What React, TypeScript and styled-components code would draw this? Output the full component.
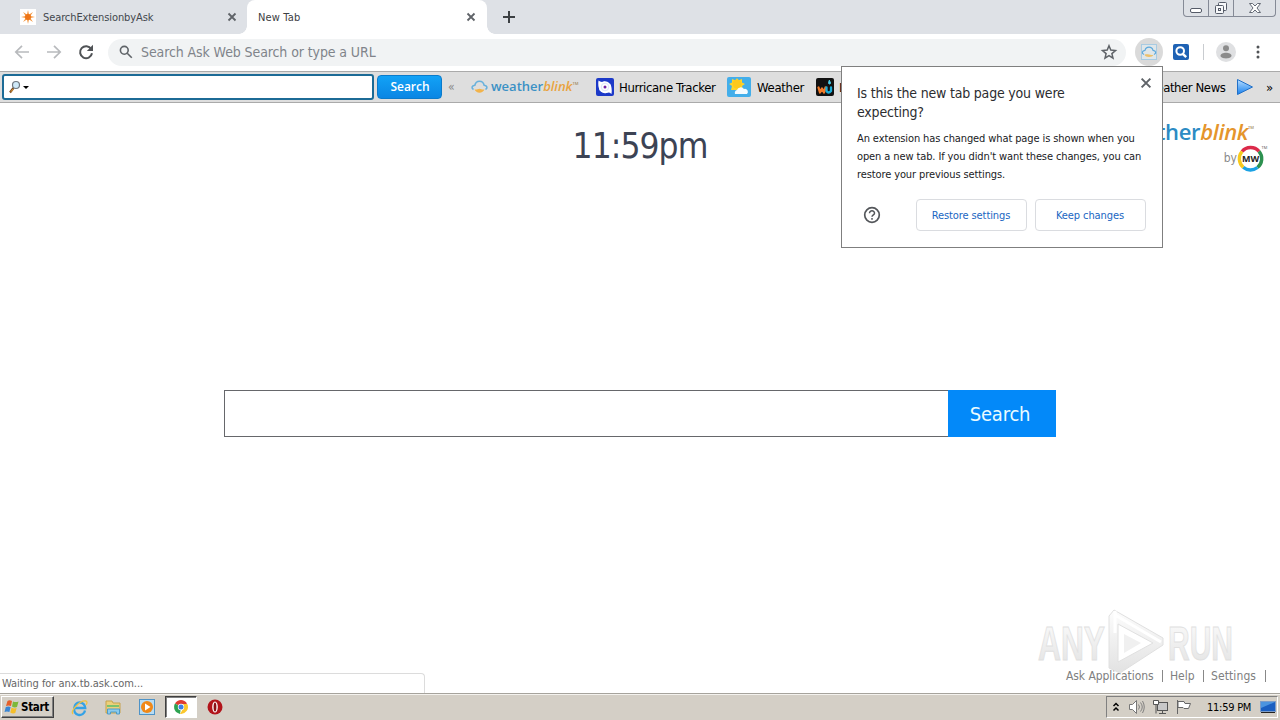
import React from "react";
import styled, { createGlobalStyle, css } from "styled-components";

const Global = createGlobalStyle`
  *, *::before, *::after { box-sizing: border-box; }
  html, body { margin: 0; overflow: hidden; }
  body {
    font-family: "DejaVu Sans Condensed", "DejaVu Sans", sans-serif;
    font-stretch: condensed;
    font-size: 11px;
    color: #000;
  }
  svg { display: block; flex: none; overflow: visible; }
  button, input { font: inherit; }
`;

const Screen = styled.div`
  position: relative;
  width: 1280px;
  height: 720px;
  display: flex;
  flex-direction: column;
  background: #fff;
  overflow: hidden;
`;

const Label = styled.span<{ $size?: number; $color?: string; $ls?: number; $w?: number; $gap?: number }>`
  flex: none;
  white-space: nowrap;
  font-size: ${(p) => p.$size ?? 11}px;
  color: ${(p) => p.$color ?? "#000"};
  letter-spacing: ${(p) => p.$ls ?? 0}px;
  width: ${(p) => (p.$w ? `${p.$w}px` : "auto")};
  margin-left: ${(p) => p.$gap ?? 0}px;
`;

const Spacer = styled.div<{ $w?: number }>`
  flex: ${(p) => (p.$w ? `0 0 ${p.$w}px` : "1 1 0")};
`;

/* Tab strip */
const TabStrip = styled.header`
  display: flex;
  flex: 0 0 34px;
  background: #dee1e6;
`;

const Tab = styled.div<{ $active?: boolean; $w: number; $pl: number }>`
  position: relative;
  display: flex;
  align-items: center;
  width: ${(p) => p.$w}px;
  padding: 0 ${(p) => (p.$active ? 12 : 11)}px 0 ${(p) => p.$pl}px;
  ${(p) =>
    p.$active &&
    css`
      background: #fff;
      border-radius: 8px 8px 0 0;
      &::before, &::after {
        content: "";
        position: absolute;
        bottom: 0;
        width: 8px;
        height: 8px;
      }
      &::before { left: -8px; background: radial-gradient(circle at 0 0, transparent 7.5px, #fff 8px); }
      &::after { right: -8px; background: radial-gradient(circle at 100% 0, transparent 7.5px, #fff 8px); }
    `}
`;

const Favicon = styled.div`
  width: 16px;
  height: 16px;
  margin-right: 7px;
  background: #fff;
`;

const WindowControls = styled.div`
  display: flex;
  height: 17px;
  margin-right: 4px;
  border: 1px solid #858a96;
  border-top: 0;
  border-radius: 0 0 4px 4px;
`;

const WindowButton = styled.div<{ $w: number }>`
  display: flex;
  justify-content: center;
  width: ${(p) => p.$w}px;
  & + & { border-left: 1px solid #858a96; }
`;

/* Address bar */
const NavBar = styled.nav`
  display: flex;
  align-items: center;
  flex: 0 0 37px;
  padding: 0 0 1px 14px;
  background: #fff;
`;

const Omnibox = styled.div`
  display: flex;
  align-items: center;
  width: 1018px;
  height: 27px;
  margin-left: 14px;
  padding: 0 9px 0 11px;
  border-radius: 14px;
  background: #f1f3f4;
`;

const ExtensionHalo = styled.div`
  display: flex;
  align-items: center;
  justify-content: center;
  width: 28px;
  height: 28px;
  margin-left: 9px;
  border-radius: 50%;
  background: #dadada;
`;

const NavDivider = styled.div`
  width: 1px;
  height: 16px;
  margin: 0 12px 0 14px;
  background: #c9ccd0;
`;

/* Extension toolbar */
const AskBar = styled.div`
  display: flex;
  align-items: center;
  flex: 0 0 32px;
  padding: 0 6px 0 2px;
  border-top: 1px solid #aaa;
  border-bottom: 1px solid #aaa;
  background: #dedede;
`;

const AskInput = styled.div`
  display: flex;
  align-items: center;
  width: 372px;
  height: 26px;
  padding-left: 5px;
  border: 2px solid #1c6b96;
  border-radius: 3px;
  background: #fff;
`;

const AskSearch = styled.button`
  width: 65px;
  height: 24px;
  margin-left: 3px;
  padding: 0 0 1px 1px;
  border: 1px solid #0b7bcb;
  border-radius: 4px;
  background: linear-gradient(#12a2f6, #0a86e4);
  color: #fff;
  font-family: "Open Sans", sans-serif;
  font-stretch: normal;
  font-size: 12px;
  font-weight: 600;
`;

const Brand = styled.span<{ $size: number; $ls?: number; $tone: string; $accent: string }>`
  flex: none;
  font-family: "Open Sans", sans-serif;
  font-stretch: normal;
  font-size: ${(p) => p.$size}px;
  line-height: 1;
  font-weight: 600;
  letter-spacing: ${(p) => p.$ls ?? 0}px;
  color: ${(p) => p.$tone};
  white-space: nowrap;
  i { color: ${(p) => p.$accent}; }
  sup {
    position: relative;
    top: ${(p) => -p.$size * 0.48}px;
    font-size: 4px;
    line-height: 0;
    letter-spacing: 0;
    vertical-align: baseline;
    color: #a08a62;
  }
`;

const BarBrand = styled.div`
  display: flex;
  align-items: center;
  width: 108px;
  gap: 3px;
  padding-bottom: 1px;
`;

/* New tab page */
const Page = styled.main`
  position: relative;
  flex: 1;
  display: flex;
  flex-direction: column;
  align-items: center;
`;

const Clock = styled.div`
  height: 50px;
  margin-top: 18px;
  line-height: 50px;
  font-size: 35px;
  letter-spacing: -0.95px;
  color: #3c4354;
`;

const PageLogo = styled.div`
  position: absolute;
  top: 17px;
  right: 13px;
  display: flex;
  flex-direction: column;
  align-items: flex-end;
  gap: 2px;
`;

const BrandInset = styled.div`
  display: flex;
  padding-right: 13px;
`;

const PoweredBy = styled.div`
  display: flex;
  align-items: center;
  height: 28px;
`;

const SearchRow = styled.form`
  display: flex;
  width: 832px;
  height: 47px;
  margin-top: 219px;
`;

const SearchField = styled.input`
  flex: 1;
  border: 1px solid #66676b;
  border-right: 0;
  padding: 0 12px;
  outline: 0;
`;

const SearchButton = styled.button`
  width: 108px;
  border: 0;
  padding: 0 4px 0 0;
  background: #0389f9;
  color: #e9fbff;
  font-size: 20px;
  letter-spacing: -0.2px;
`;

const Footer = styled.footer`
  align-self: stretch;
  display: flex;
  justify-content: space-between;
  align-items: flex-end;
  margin-top: auto;
`;

const StatusBubble = styled.div`
  display: flex;
  align-items: center;
  width: 425px;
  height: 20px;
  padding-left: 2px;
  border: 1px solid #dcdcdc;
  border-left: 0;
  border-bottom: 0;
  border-radius: 0 4px 0 0;
  background: #fff;
`;

const FooterLinks = styled.div`
  display: flex;
  align-items: center;
  width: 214px;
  height: 34px;
`;

const Pipe = styled.div<{ $l: number; $r: number }>`
  width: 1px;
  height: 12px;
  margin: 0 ${(p) => p.$r}px 0 ${(p) => p.$l}px;
  background: #888;
`;

const Watermark = styled.div`
  position: absolute;
  left: 1030px;
  top: 606px;
`;

/* Extension prompt */
const Prompt = styled.section`
  position: absolute;
  left: 841px;
  top: 66px;
  width: 322px;
  height: 182px;
  padding: 17px 16px 16px 15px;
  border: 1px solid #7f7f7f;
  background: #fff;
`;

const PromptClose = styled.div`
  position: absolute;
  top: 11px;
  right: 11px;
`;

const PromptTitle = styled.div`
  font-size: 14px;
  line-height: 19px;
  letter-spacing: -0.19px;
  white-space: nowrap;
  color: #2c2d30;
`;

const PromptBody = styled.div`
  margin-top: 8px;
  font-size: 11px;
  line-height: 18px;
  letter-spacing: -0.11px;
  white-space: nowrap;
  color: #202124;
`;

const PromptActions = styled.div`
  display: flex;
  align-items: center;
  gap: 8px;
  margin-top: 15px;
  padding-left: 6px;
`;

const PromptButton = styled.button`
  width: 111px;
  height: 32px;
  padding: 0 1px 0 0;
  border: 1px solid #dadce0;
  border-radius: 4px;
  background: #fff;
  color: #1a66c2;
  letter-spacing: -0.1px;
`;

/* Taskbar */
const Taskbar = styled.div`
  display: flex;
  align-items: center;
  flex: 0 0 27px;
  padding: 0 2px 0 1px;
  border-top: 1px solid #a6a39c;
  box-shadow: inset 0 1px #f4f2ee;
  background: #d4cfc6;
`;

const StartButton = styled.div`
  display: flex;
  align-items: center;
  gap: 1px;
  width: 53px;
  height: 22px;
  padding-left: 2px;
  border: 1px solid;
  border-color: #fff #404040 #404040 #fff;
  box-shadow: inset -1px -1px #808080;
  font-weight: bold;
  font-size: 11.5px;
  letter-spacing: -0.3px;
`;

const TaskIcon = styled.div<{ $pressed?: boolean }>`
  display: flex;
  align-items: center;
  justify-content: center;
  width: ${(p) => (p.$pressed ? 32 : 34)}px;
  height: 22px;
  ${(p) =>
    p.$pressed &&
    css`
      margin: 0 1px;
      border: 1px solid;
      border-color: #404040 #fff #fff #404040;
      box-shadow: inset 1px 1px #808080;
      background: #fff;
    `}
`;

const Tray = styled.div`
  display: flex;
  align-items: center;
  width: 172px;
  height: 22px;
  padding-left: 5px;
  border: 1px solid;
  border-color: #808080 #fff #fff #808080;
`;

const Cross = ({ color = "#5f6368", size = 8, weight = 1.8 }: { color?: string; size?: number; weight?: number }) => (
  <svg width={size} height={size} viewBox="0 0 8 8">
    <path d="M.5.5l7 7M7.5.5l-7 7" stroke={color} strokeWidth={weight} />
  </svg>
);

const Arrow = ({ flip }: { flip?: boolean }) => (
  <svg width="16" height="16" viewBox="0 0 16 16" transform={flip ? "scale(-1 1)" : undefined}>
    <path d="M15 8H2M8 1.8L1.8 8 8 14.2" fill="none" stroke="#b8babd" strokeWidth="1.7" />
  </svg>
);

const CloudSun = () => (
  <svg width="17" height="15" viewBox="0 0 17 15">
    <path d="M2.500 10.500C0 9 .8 6.800 3.800 6.300 5 .8 12 .8 13.200 6.300c3 .5 3.800 2.700 1.300 4.200" fill="none" stroke="#68b1dc" strokeWidth="1.600" />
    <path d="M3.500 10.300c2 .8 3-.6 5-.6s3 1.400 5 .6c-1.500 4.500-8.500 4.500-10 0z" fill="#f2b34a" />
  </svg>
);

const MwBadge = () => (
  <svg width="30" height="28" viewBox="1 0 30 28">
    <g fill="none" strokeWidth="3.4">
      <path d="M6 7.500A11.200 11.200 0 0123 7.400" stroke="#dc2a4a" />
      <path d="M23 7.400A11.200 11.200 0 0121.500 23.500" stroke="#2d9150" />
      <path d="M21.500 23.500A11.200 11.200 0 017.200 23.200" stroke="#1ba2e4" />
      <path d="M7.200 23.200A11.200 11.200 0 016 7.500" stroke="#f7c91d" />
    </g>
    <text x="14.500" y="18.300" textAnchor="middle" fontFamily="Open Sans" fontStretch="normal" fontWeight="700" fontSize="9" fill="#222">MW</text>
    <text x="25.500" y="4.500" fontFamily="Open Sans" fontStretch="normal" fontSize="4" fill="#555">TM</text>
  </svg>
);

const AnyRun = () => (
  <svg width="210" height="70" viewBox="0 0 210 70">
    <defs>
      <linearGradient id="wm" x1="0" y1="0" x2="0" y2="1">
        <stop offset="0" stopColor="#fdfdfd" />
        <stop offset="1" stopColor="#e2e2e2" />
      </linearGradient>
    </defs>
    <g fontFamily="Liberation Sans Narrow, Liberation Sans" fontWeight="bold" fontSize="49" fill="url(#wm)" stroke="#e0e0e0" strokeWidth="1">
      <text x="8" y="54" textLength="67" lengthAdjust="spacingAndGlyphs">ANY</text>
      <text x="138" y="54" textLength="65" lengthAdjust="spacingAndGlyphs">RUN</text>
    </g>
    <path d="M79 10V62L90 67 133 39V32L84 4zM88 18L123 37 88 56z" fill="url(#wm)" fillRule="evenodd" stroke="#e0e0e0" />
    <path d="M85 5V27M85 9L131 36" stroke="#fff" strokeWidth="3" />
    <path d="M94 28V47L111 37z" fill="#f0f0f0" />
  </svg>
);

export default function App() {
  return (
    <>
      <Global />
      <Screen>
        <TabStrip>
          <Tab $w={247} $pl={20}>
            <Favicon>
              <svg width="16" height="16" viewBox="-8 -8 16 16">
                {[0, 45, 90, 135].map((a) => (
                  <path key={a} d="M-7 0L0-1.5 7 0 0 1.5z" fill="#f3943c" transform={`rotate(${a})`} />
                ))}
                <circle r="3" fill="#ee7518" />
              </svg>
            </Favicon>
            <Label $color="#43474d" $ls={-0.1}>SearchExtensionbyAsk</Label>
            <Spacer />
            <Cross />
          </Tab>
          <Tab $active $w={240} $pl={11}>
            <Label $color="#3c4043" $ls={0.15}>New Tab</Label>
            <Spacer />
            <Cross />
          </Tab>
          <Spacer $w={16} />
          <svg width="12" height="34" viewBox="0 0 12 34">
            <path d="M6 11v12M0 17h12" stroke="#3c4043" strokeWidth="2" />
          </svg>
          <Spacer />
          <WindowControls>
            <WindowButton $w={24}>
              <svg width="14" height="16"><rect x="1.5" y="8.5" width="11" height="4" rx="1.5" fill="#fff" stroke="#555b68" /></svg>
            </WindowButton>
            <WindowButton $w={25}>
              <svg width="14" height="16" fill="#f7f8fa" stroke="#555b68">
                <rect x="4.5" y="2.5" width="8" height="8" rx="1" />
                <rect x="1.5" y="5.5" width="8" height="8" rx="1" />
                <rect x="4.5" y="8.5" width="2" height="2" />
              </svg>
            </WindowButton>
            <WindowButton $w={42}>
              <svg width="14" height="16" viewBox="0 0 14 16">
                <path d="M1.5 3.5h3L7 6l2.500-2.500h3L9 8l3.500 4.500h-3L7 10l-2.500 2.500h-3L5 8z" fill="#fff" stroke="#555b68" strokeWidth=".9" />
              </svg>
            </WindowButton>
          </WindowControls>
        </TabStrip>

        <NavBar>
          <Arrow />
          <Spacer $w={16} />
          <Arrow flip />
          <Spacer $w={16} />
          <svg width="16" height="16" viewBox="0 0 16 16">
            <path d="M13.200 5A6 6 0 1014 9.300" fill="none" stroke="#505356" strokeWidth="2" />
            <path d="M15 .8V7H8.800z" fill="#505356" />
          </svg>
          <Omnibox>
            <svg width="14" height="14" viewBox="0 0 14 14" fill="none" stroke="#5f6368" strokeWidth="1.600">
              <circle cx="5.300" cy="5.300" r="3.900" />
              <path d="M8.200 8.200l4.600 4.600" />
            </svg>
            <Label $size={14} $color="#80848a" $gap={8} $ls={-0.1}>Search Ask Web Search or type a URL</Label>
            <Spacer />
            <svg width="16" height="16" viewBox="0 0 16 16">
              <path d="M8 1.800l1.800 4.300 4.700.4-3.600 3.100 1.100 4.600-4-2.500-4 2.500 1.100-4.600L1.500 6.500l4.700-.4z" fill="none" stroke="#5f6368" strokeWidth="1.500" />
            </svg>
          </Omnibox>
          <ExtensionHalo>
            <svg width="16" height="16" viewBox="0 0 16 16">
              <rect x=".5" y=".5" width="15" height="15" fill="#dfe6e9" stroke="#a8cbe2" />
              <path d="M3 10.500C.5 9.500.8 6.500 4 6.300c1-4.300 7-4.300 8 0 3.200.2 3.500 3.200 1 4.200" fill="none" stroke="#5ca8dc" strokeWidth="1.200" />
              <path d="M3.500 10.800c3-1.500 5 .8 9 0-1 3-8 3-9 0z" fill="#ecc06a" />
            </svg>
          </ExtensionHalo>
          <Spacer $w={10} />
          <svg width="16" height="16" viewBox="0 0 16 16">
            <rect width="16" height="16" rx="2" fill="#1e62b4" />
            <circle cx="7.200" cy="7" r="3.800" fill="none" stroke="#fff" strokeWidth="2" />
            <path d="M9.800 9.800l3.400 3.400" stroke="#fff" strokeWidth="2.400" />
          </svg>
          <NavDivider />
          <svg width="20" height="20" viewBox="0 0 20 20">
            <circle cx="10" cy="10" r="10" fill="#dfe0e2" />
            <circle cx="10" cy="6.300" r="3" fill="#8b8b8b" />
            <path d="M4.500 13.800c0-4 11-4 11 0 0 3.500-11 3.500-11 0z" fill="#8b8b8b" />
          </svg>
          <Spacer $w={20} />
          <svg width="4" height="16" fill="#505356">
            <circle cx="2" cy="3" r="1.500" /><circle cx="2" cy="8" r="1.500" /><circle cx="2" cy="13" r="1.500" />
          </svg>
        </NavBar>

        <AskBar>
          <AskInput>
            <svg width="20" height="14" viewBox="0 0 20 14">
              <path d="M4.500 8L1 12.500" stroke="#7b4a1c" strokeWidth="2.200" />
              <path d="M4.200 9L2 11.700" stroke="#f0a83c" />
              <circle cx="7" cy="5" r="3.500" fill="#cfe9f8" stroke="#6f7780" strokeWidth="1.200" />
              <path d="M14 6h6l-3 3z" fill="#000" />
            </svg>
          </AskInput>
          <AskSearch>Search</AskSearch>
          <Label $size={12} $gap={6} $w={17} $color="#888">«</Label>
          <Spacer $w={6} />
          <BarBrand>
            <CloudSun />
            <Brand $size={13} $tone="#3b91c5" $accent="#e9a340">weather<i>blink</i><sup>TM</sup></Brand>
          </BarBrand>
          <Spacer />
          <svg width="18" height="18" viewBox="0 0 18 18">
            <rect width="18" height="18" rx="2" fill="#1c39c8" />
            <circle cx="9" cy="9.300" r="6" fill="#fff" />
            <path d="M2.500 2.500Q5 5 9 3.300L4 13Q1.500 8 2.500 2.500zM15.500 16Q13 13.500 9 15.200L14 5.500Q16.500 10 15.500 16z" fill="#fff" />
            <circle cx="9" cy="9" r="3.800" fill="none" stroke="#d3dafa" strokeWidth=".8" />
            <circle cx="9" cy="9" r="1.500" fill="#7321a5" />
          </svg>
          <Label $size={13} $gap={5} $w={97} $ls={-0.37}>Hurricane Tracker</Label>
          <Spacer $w={11} />
          <svg width="24" height="20" viewBox="0 0 24 20">
            <rect width="24" height="20" rx="2" fill="#43aeea" />
            <path d="M10 1l1.500 2.500L15 2v3.500l3 1.500-3 2 1 4H4L5 9 2 7l3-1.500L5 2l3.500 1.500z" fill="#ffd42c" />
            <circle cx="10" cy="7" r="4.500" fill="#ffc91d" />
            <path d="M8 17a3 3 0 012-4 4 4 0 017-1 3 3 0 013 5z" fill="#f4fbff" />
          </svg>
          <Label $size={13} $gap={6} $w={48} $ls={-0.3}>Weather</Label>
          <Spacer $w={11} />
          <svg width="18" height="18" viewBox="0 0 18 18" fill="none" strokeWidth="2.300" strokeLinecap="round" strokeLinejoin="round">
            <rect width="18" height="18" rx="2" fill="#111" />
            <path d="M2.500 9.500l1.500 5 2-4 2 4 1.500-5" stroke="#f27a28" />
            <path d="M10.500 9.500v3.500q2 3 4.500 0V9.500" stroke="#1bacd7" />
            <path d="M13.500 2.500l1 2.500a1 1 0 01-2 0z" fill="#4cd2f0" stroke="#4cd2f0" strokeWidth="1" />
          </svg>
          <Label $size={13} $gap={5} $w={307}>L</Label>
          <Label $size={13} $w={79} $ls={-0.42}>Weather News</Label>
          <Spacer $w={11} />
          <svg width="18" height="18" viewBox="0 0 18 18">
            <defs>
              <linearGradient id="play" x1="0" y1="0" x2="0" y2="1"><stop stopColor="#b8deff" /><stop offset="1" stopColor="#1680ee" /></linearGradient>
            </defs>
            <path d="M1.500 1.500v15l15-7.500z" fill="url(#play)" stroke="#2170c8" />
          </svg>
          <Label $size={13} $gap={12} $w={8}>»</Label>
        </AskBar>

        <Page>
          <Clock>11:59pm</Clock>
          <PageLogo>
            <BrandInset>
              <Brand $size={22} $ls={-0.35} $tone="#2c8bc4" $accent="#e5952b">weather<i>blink</i><sup>TM</sup></Brand>
            </BrandInset>
            <PoweredBy>
              <Label $size={12} $color="#8a8a8a">by</Label>
              <MwBadge />
            </PoweredBy>
          </PageLogo>
          <SearchRow onSubmit={(e) => e.preventDefault()}>
            <SearchField />
            <SearchButton>Search</SearchButton>
          </SearchRow>
          <Footer>
            <StatusBubble><Label $color="#666" $ls={-0.04}>Waiting for anx.tb.ask.com...</Label></StatusBubble>
            <FooterLinks>
              <Label $size={12} $color="#808080" $w={88} $ls={-0.07}>Ask Applications</Label>
              <Pipe $l={8} $r={7} />
              <Label $size={12} $color="#808080" $w={25}>Help</Label>
              <Pipe $l={8} $r={7} />
              <Label $size={12} $color="#808080" $w={46} $ls={0.1}>Settings</Label>
              <Pipe $l={8} $r={0} />
            </FooterLinks>
          </Footer>
        </Page>

        <Taskbar>
          <StartButton>
            <svg width="16" height="16" viewBox="0 0 16 16">
              <path d="M3.500 2q2-1.500 4.500 0L7 7Q4.500 6 2 7z" fill="#e6602a" />
              <path d="M9 2.500q2.500 1 5.500 0L13 8q-2.500 1-5-.5z" fill="#7db83a" />
              <path d="M1.800 8q2.500-1 4.800 0l-1.200 5Q3 12 .5 13z" fill="#3a86d4" />
              <path d="M7.600 8.500q2.500 1.500 5 .5l-1.300 5q-2.500 1-5-.5z" fill="#f5be2a" />
            </svg>
            Start
          </StartButton>
          <Spacer $w={8} />
          <TaskIcon>
            <svg width="17" height="17" viewBox="0 0 17 17" fill="none">
              <path d="M14 11.500A5.500 5.500 0 113.300 9h11A5.600 5.600 0 008.700 3.500 5.500 5.500 0 003.300 9" stroke="#34a2e6" strokeWidth="2.300" />
              <path d="M2 15C-1 12 9 1 15 2q2 1 0 4" stroke="#efc243" strokeWidth="1.300" />
            </svg>
          </TaskIcon>
          <TaskIcon>
            <svg width="17" height="16" viewBox="0 0 17 16">
              <path d="M1 2h6l1 2h7v10H1z" fill="#ecd07a" stroke="#c5a24c" />
              <path d="M2 6h12v2H2z" fill="#7cc26e" />
              <path d="M2.500 15v-5h12v5h-3v-2h-6v2z" fill="#8ccbed" stroke="#4f9bc8" />
            </svg>
          </TaskIcon>
          <TaskIcon>
            <svg width="16" height="16" viewBox="0 0 16 16">
              <rect x=".5" y=".5" width="15" height="15" fill="#b8dcf3" stroke="#4e93c7" />
              <circle cx="8" cy="8" r="6" fill="#f08818" />
              <path d="M6 4.500v7L11.500 8z" fill="#fff" />
            </svg>
          </TaskIcon>
          <TaskIcon $pressed>
            <svg width="14" height="14" viewBox="0 0 14 14">
              <path d="M7 7L1 3.500A7 7 0 0113 3.500z" fill="#df3c31" />
              <path d="M7 7L1 3.500a7 7 0 005 10.400z" fill="#2da351" />
              <path d="M7 4h6.300A7 7 0 016 13.900L9.500 8z" fill="#fbc72d" />
              <circle cx="7" cy="7" r="3.200" fill="#fff" /><circle cx="7" cy="7" r="2.500" fill="#3d7fe6" />
            </svg>
          </TaskIcon>
          <TaskIcon>
            <svg width="16" height="16" viewBox="0 0 16 16">
              <circle cx="8" cy="8" r="7.500" fill="#b2141b" />
              <ellipse cx="8" cy="8" rx="2.800" ry="5.500" fill="#fff" /><ellipse cx="8" cy="8" rx="1.400" ry="4.500" fill="#8c1015" />
            </svg>
          </TaskIcon>
          <Spacer />
          <Tray>
            <svg width="8" height="10" fill="none" stroke="#000" strokeWidth="1.500"><path d="M1.500 4L4 1.500 6.500 4M1.500 8.500L4 6l2.500 2.500" /></svg>
            <Spacer $w={8} />
            <svg width="17" height="16" viewBox="0 0 17 16" fill="none" stroke="#777">
              <path d="M1.500 5.500h3l4-4v13l-4-4h-3z" fill="#fff" />
              <path d="M10.500 5.500q2 2.500 0 5M12.500 3.500q3.500 4.500 0 9M14.500 2q3.500 6 0 12" strokeWidth=".9" />
            </svg>
            <Spacer $w={7} />
            <svg width="17" height="16" viewBox="0 0 17 16" fill="#fff" stroke="#555">
              <rect x="5.500" y="3.500" width="10" height="8" fill="#c8c8c8" />
              <path d="M1.500 1.500h5v4h-5zM4 5.500v9M7 14.500h7M10.500 12v2" />
            </svg>
            <Spacer $w={6} />
            <svg width="17" height="16" viewBox="0 0 17 16" fill="#fff" stroke="#666">
              <path d="M2.500 1v14M3 2.500h6l1 2h5.500l-2 5H9l-1-1H3z" />
            </svg>
            <Label $size={11} $gap={15} $w={46} $ls={-0.25}>11:59 PM</Label>
            <Spacer $w={7} />
            <svg width="16" height="13" viewBox="0 0 16 13">
              <rect x=".5" y=".5" width="15" height="10" fill="#1b5fc1" stroke="#7c9cc8" />
              <path d="M1 1h14L1 7z" fill="#4c94df" /><path d="M1 11h14v1H1z" fill="#222" />
            </svg>
          </Tray>
        </Taskbar>

        <Watermark><AnyRun /></Watermark>

        <Prompt>
          <PromptClose><Cross size={10} weight={1.6} /></PromptClose>
          <PromptTitle>Is this the new tab page you were<br />expecting?</PromptTitle>
          <PromptBody>
            An extension has changed what page is shown when you<br />
            open a new tab. If you didn't want these changes, you can<br />
            restore your previous settings.
          </PromptBody>
          <PromptActions>
            <svg width="18" height="18" viewBox="0 0 18 18" fill="none" stroke="#54575b" strokeWidth="1.700">
              <circle cx="9" cy="9" r="7.300" />
              <path d="M6.500 7.200a2.500 2.500 0 115 0c0 1.600-2.500 1.700-2.500 3.600M9 12v1.700" strokeWidth="1.500" />
            </svg>
            <Spacer />
            <PromptButton>Restore settings</PromptButton>
            <PromptButton>Keep changes</PromptButton>
          </PromptActions>
        </Prompt>
      </Screen>
    </>
  );
}
